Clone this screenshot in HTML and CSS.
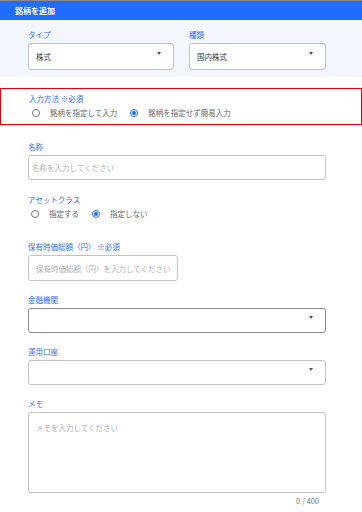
FILE: index.html
```html
<!DOCTYPE html>
<html lang="ja">
<head>
    <meta charset="UTF-8">
    <meta name="viewport" content="width=device-width, initial-scale=1.0">
    <title>銘柄を追加</title>
    <link rel="stylesheet" href="styles.css">
</head>
<body>
    <!-- Header -->
    <div class="header">銘柄を追加</div>

    <!-- Type / Kind -->
    <div class="type-area">
        <div>
            <div class="label">タイプ</div>
            <div class="select select-tall">
                <span>株式</span>
                <span class="arrow"></span>
            </div>
        </div>
        <div>
            <div class="label">種類</div>
            <div class="select select-tall">
                <span>国内株式</span>
                <span class="arrow"></span>
            </div>
        </div>
    </div>

    <!-- Input method -->
    <div class="required-box">
        <div class="label">入力方法 ※必須</div>
        <div class="radio-row">
            <label class="radio"><span class="circle"></span>銘柄を指定して入力</label>
            <label class="radio"><span class="circle checked"></span>銘柄を指定せず簡易入力</label>
        </div>
    </div>

    <div class="form">
        <div class="field field-name">
            <div class="label">名称</div>
            <input class="control input-name" type="text" placeholder="名称を入力してください">
        </div>

        <div class="field field-asset">
            <div class="label">アセットクラス</div>
            <div class="radio-row">
                <label class="radio"><span class="circle"></span>指定する</label>
                <label class="radio"><span class="circle checked"></span>指定しない</label>
            </div>
        </div>

        <div class="field field-amount">
            <div class="label">保有時価総額（円） ※必須</div>
            <input class="control input-amount" type="text" placeholder="保有時価総額（円）を入力してください">
        </div>

        <div class="field">
            <div class="label">金融機関</div>
            <div class="select focused">
                <span></span>
                <span class="arrow"></span>
            </div>
        </div>

        <div class="field">
            <div class="label">運用口座</div>
            <div class="select">
                <span></span>
                <span class="arrow"></span>
            </div>
        </div>

        <div class="field">
            <div class="label">メモ</div>
            <textarea class="memo" placeholder="メモを入力してください"></textarea>
            <div class="counter">0 / 400</div>
        </div>
    </div>
</body>
</html>
```

FILE: styles.css
```css
body {
    margin: 0;
    font-family: "Noto Sans CJK JP", "Noto Sans", sans-serif;
    font-size: 7.5px;
    background-color: #ffffff;
    color: #333333;
}
.header {
    border-top: 1px solid #8a8a8a;
    background-color: #1f6cff;
    height: 19px;
    line-height: 19px;
    padding-left: 15px;
    color: #ffffff;
    font-size: 8px;
    font-weight: bold;
}
.type-area {
    background-color: #f3f6fd;
    padding: 9px 0 7px 28px;
    display: grid;
    grid-template-columns: 146px 137px;
    column-gap: 15px;
}
.label {
    line-height: 12px;
    height: 12px;
    margin-bottom: 2px;
    color: #2f6ef0;
}
.select {
    box-sizing: border-box;
    height: 25px;
    border: 1px solid #c4c4c4;
    border-radius: 3px;
    background: #ffffff;
    display: flex;
    justify-content: space-between;
    align-items: center;
    padding: 0 12px 0 7px;
}
.select-tall {
    height: 27px;
    border-color: #c0c0c0;
}
.select.focused {
    border-color: #8a8a8a;
}
.arrow {
    width: 0;
    height: 0;
    border-left: 2.5px solid transparent;
    border-right: 2.5px solid transparent;
    border-top: 3px solid #555555;
    margin-bottom: 7px;
}
.required-box {
    margin-top: 11px;
    height: 37px;
    box-sizing: border-box;
    border: 1px solid #e2000c;
    padding: 4px 0 0 28px;
}
.radio-row {
    display: flex;
    gap: 10px;
    margin-top: 1px;
    height: 12px;
    line-height: 12px;
}
.radio {
    display: inline-flex;
    align-items: center;
    color: #666666;
}
.circle {
    box-sizing: border-box;
    width: 8px;
    height: 8px;
    margin: 0 10px 0 3px;
    border: 1px solid #777777;
    border-radius: 50%;
    display: inline-flex;
    align-items: center;
    justify-content: center;
}
.circle.checked {
    border-color: #1f6cff;
}
.circle.checked::after {
    content: "";
    width: 4px;
    height: 4px;
    border-radius: 50%;
    background: #1f6cff;
}
.form {
    padding: 0 36px 0 28px;
}
.field {
    margin-top: 13px;
}
.field-name {
    margin-top: 16px;
}
.field-asset {
    margin-top: 14px;
}
.field-amount {
    margin-top: 21px;
}
.control {
    box-sizing: border-box;
    display: block;
    width: 100%;
    height: 25px;
    border: 1px solid #c4c4c4;
    border-radius: 3px;
    padding: 0 7px;
    font-family: inherit;
    font-size: 7.5px;
    color: #333333;
    outline: none;
}
.input-name {
    padding-left: 3px;
}
.input-amount {
    width: 150px;
    height: 26px;
}
input::placeholder, textarea::placeholder {
    color: #b0b0b0;
}
.memo {
    box-sizing: border-box;
    display: block;
    width: 100%;
    height: 81px;
    border: 1px solid #c4c4c4;
    border-radius: 3px;
    padding: 9px 7px;
    font-family: inherit;
    font-size: 7.5px;
    resize: none;
    outline: none;
}
.counter {
    margin-top: 2px;
    line-height: 12px;
    text-align: right;
    padding-right: 7px;
    color: #777777;
}
```
